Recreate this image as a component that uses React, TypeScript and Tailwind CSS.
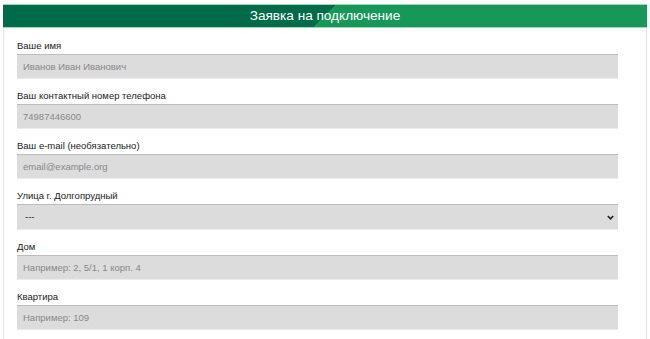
import React from 'react'

interface FieldProps {
  label: string
  placeholder: string
}

function Field({ label, placeholder }: FieldProps) {
  return (
    <div className="mb-[9px]">
      <div className="h-4 text-[9.5px] leading-4 text-[#222]">{label}</div>
      <input
        className="block h-[25px] w-[601px] border-t border-b border-t-[#bdbdbd] border-b-[#ececec] bg-[#dcdcdc] px-[6px] text-[9.5px] text-[#555] outline-none placeholder:text-[#888]"
        placeholder={placeholder}
        readOnly
      />
    </div>
  )
}

function StreetSelect() {
  return (
    <div className="mb-[9px]">
      <div className="h-4 text-[9.5px] leading-4 text-[#222]">
        Улица г. Долгопрудный
      </div>
      <div className="relative flex h-[26px] w-[601px] items-center border-t border-b border-t-[#bdbdbd] border-b-[#ececec] bg-[#dcdcdc] px-[8px] text-[9.5px] text-[#222]">
        <span>---</span>
        <svg
          className="absolute right-[4px] top-[10px]"
          width="7"
          height="5"
          viewBox="0 0 7 5"
        >
          <path d="M0.8 1 L3.5 3.8 L6.2 1" fill="none" stroke="#222" strokeWidth="1.6" />
        </svg>
      </div>
    </div>
  )
}

export default function App() {
  return (
    <div className="min-h-[339px] bg-white pt-1 font-['Liberation_Sans',Arial,sans-serif]">
      <div className="mx-[3px] min-h-[335px] border-x border-[#e3e3e3]">
        <div className="-mx-px flex h-6 items-center justify-center border-y border-[#9fd6b8] bg-[linear-gradient(135deg,#006b48_50%,#17985a_50%)] text-[13.6px] text-white">
          Заявка на подключение
        </div>
        <div className="pl-[13px] pt-[10px]">
          <Field label="Ваше имя" placeholder="Иванов Иван Иванович" />
          <Field label="Ваш контактный номер телефона" placeholder="74987446600" />
          <Field label="Ваш e-mail (необязательно)" placeholder="email@example.org" />
          <StreetSelect />
          <Field label="Дом" placeholder="Например: 2, 5/1, 1 корп. 4" />
          <Field label="Квартира" placeholder="Например: 109" />
        </div>
      </div>
    </div>
  )
}
